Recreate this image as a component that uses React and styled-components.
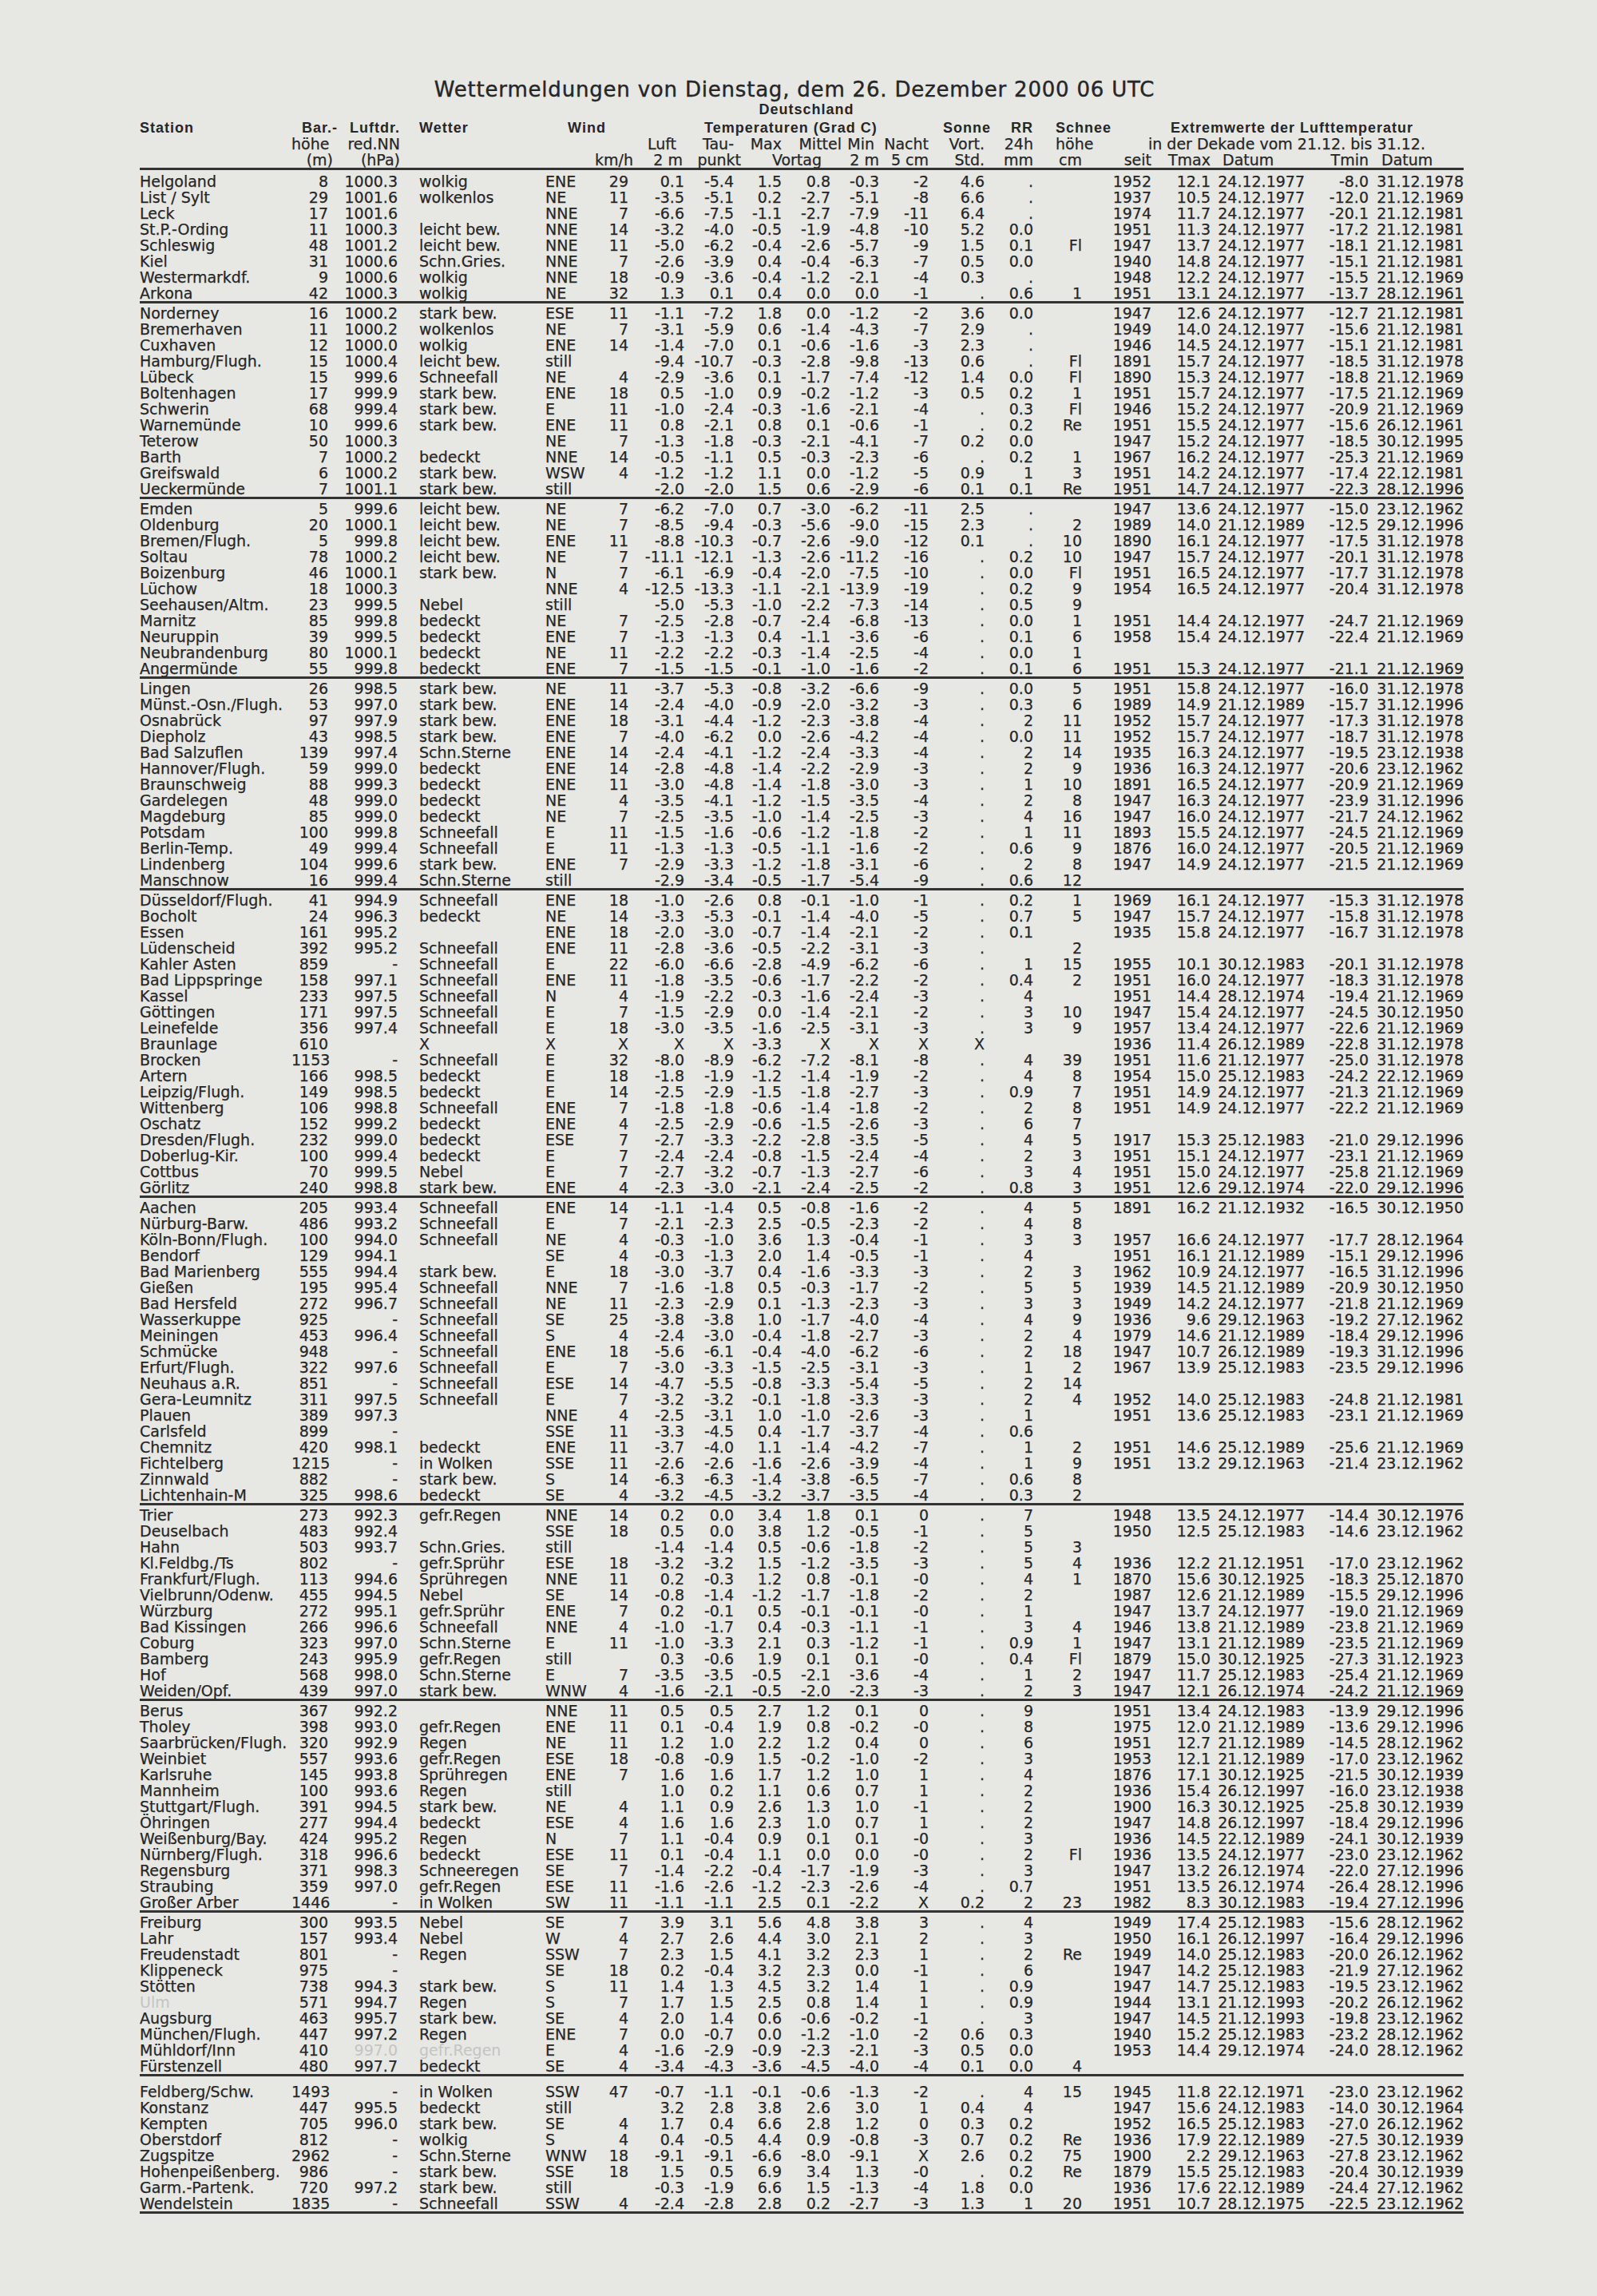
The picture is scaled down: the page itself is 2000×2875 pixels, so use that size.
import React from 'react';
import styled, {createGlobalStyle, css} from 'styled-components';

// column tracks, in px, left edge of the sheet is x=175
const COLUMNS = [
  {key: 'station', w: 190, align: 'left'},
  {key: 'bar', w: 46},
  {key: 'druck', w: 87},
  {key: 'wetter', w: 185, align: 'left', pad: 27},
  {key: 'wind', w: 62, align: 'left'},
  {key: 'kmh', w: 42},
  {key: 'luft', w: 70},
  {key: 'tau', w: 62},
  {key: 'max', w: 60},
  {key: 'mittel', w: 61},
  {key: 'min', w: 61},
  {key: 'nacht', w: 62},
  {key: 'sonne', w: 70},
  {key: 'rr', w: 61},
  {key: 'schnee', w: 61},
  {key: 'seit', w: 87},
  {key: 'tmax', w: 74},
  {key: 'tmaxd', w: 118},
  {key: 'tmin', w: 80},
  {key: 'tmind', w: 119},
];

const GRID = COLUMNS.map(c => `${c.w}px`).join(' ');

// station|bar|hPa|wetter|wind|km/h|luft|tau|max|mittel|min|nacht|sonne|rr|schnee|seit|tmax|datum|tmin|datum
const GROUPS = [
  {
    rows: [
      'Helgoland|8|1000.3|wolkig|ENE|29|0.1|-5.4|1.5|0.8|-0.3|-2|4.6|.||1952|12.1|24.12.1977|-8.0|31.12.1978',
      'List / Sylt|29|1001.6|wolkenlos|NE|11|-3.5|-5.1|0.2|-2.7|-5.1|-8|6.6|.||1937|10.5|24.12.1977|-12.0|21.12.1969',
      'Leck|17|1001.6||NNE|7|-6.6|-7.5|-1.1|-2.7|-7.9|-11|6.4|.||1974|11.7|24.12.1977|-20.1|21.12.1981',
      'St.P.-Ording|11|1000.3|leicht bew.|NNE|14|-3.2|-4.0|-0.5|-1.9|-4.8|-10|5.2|0.0||1951|11.3|24.12.1977|-17.2|21.12.1981',
      'Schleswig|48|1001.2|leicht bew.|NNE|11|-5.0|-6.2|-0.4|-2.6|-5.7|-9|1.5|0.1|Fl|1947|13.7|24.12.1977|-18.1|21.12.1981',
      'Kiel|31|1000.6|Schn.Gries.|NNE|7|-2.6|-3.9|0.4|-0.4|-6.3|-7|0.5|0.0||1940|14.8|24.12.1977|-15.1|21.12.1981',
      'Westermarkdf.|9|1000.6|wolkig|NNE|18|-0.9|-3.6|-0.4|-1.2|-2.1|-4|0.3|.||1948|12.2|24.12.1977|-15.5|21.12.1969',
      'Arkona|42|1000.3|wolkig|NE|32|1.3|0.1|0.4|0.0|0.0|-1|.|0.6|1|1951|13.1|24.12.1977|-13.7|28.12.1961',
    ],
  },
  {
    rows: [
      'Norderney|16|1000.2|stark bew.|ESE|11|-1.1|-7.2|1.8|0.0|-1.2|-2|3.6|0.0||1947|12.6|24.12.1977|-12.7|21.12.1981',
      'Bremerhaven|11|1000.2|wolkenlos|NE|7|-3.1|-5.9|0.6|-1.4|-4.3|-7|2.9|.||1949|14.0|24.12.1977|-15.6|21.12.1981',
      'Cuxhaven|12|1000.0|wolkig|ENE|14|-1.4|-7.0|0.1|-0.6|-1.6|-3|2.3|.||1946|14.5|24.12.1977|-15.1|21.12.1981',
      'Hamburg/Flugh.|15|1000.4|leicht bew.|still||-9.4|-10.7|-0.3|-2.8|-9.8|-13|0.6|.|Fl|1891|15.7|24.12.1977|-18.5|31.12.1978',
      'Lübeck|15|999.6|Schneefall|NE|4|-2.9|-3.6|0.1|-1.7|-7.4|-12|1.4|0.0|Fl|1890|15.3|24.12.1977|-18.8|21.12.1969',
      'Boltenhagen|17|999.9|stark bew.|ENE|18|0.5|-1.0|0.9|-0.2|-1.2|-3|0.5|0.2|1|1951|15.7|24.12.1977|-17.5|21.12.1969',
      'Schwerin|68|999.4|stark bew.|E|11|-1.0|-2.4|-0.3|-1.6|-2.1|-4|.|0.3|Fl|1946|15.2|24.12.1977|-20.9|21.12.1969',
      'Warnemünde|10|999.6|stark bew.|ENE|11|0.8|-2.1|0.8|0.1|-0.6|-1|.|0.2|Re|1951|15.5|24.12.1977|-15.6|26.12.1961',
      'Teterow|50|1000.3||NE|7|-1.3|-1.8|-0.3|-2.1|-4.1|-7|0.2|0.0||1947|15.2|24.12.1977|-18.5|30.12.1995',
      'Barth|7|1000.2|bedeckt|NNE|14|-0.5|-1.1|0.5|-0.3|-2.3|-6|.|0.2|1|1967|16.2|24.12.1977|-25.3|21.12.1969',
      'Greifswald|6|1000.2|stark bew.|WSW|4|-1.2|-1.2|1.1|0.0|-1.2|-5|0.9|1|3|1951|14.2|24.12.1977|-17.4|22.12.1981',
      'Ueckermünde|7|1001.1|stark bew.|still||-2.0|-2.0|1.5|0.6|-2.9|-6|0.1|0.1|Re|1951|14.7|24.12.1977|-22.3|28.12.1996',
    ],
  },
  {
    rows: [
      'Emden|5|999.6|leicht bew.|NE|7|-6.2|-7.0|0.7|-3.0|-6.2|-11|2.5|.||1947|13.6|24.12.1977|-15.0|23.12.1962',
      'Oldenburg|20|1000.1|leicht bew.|NE|7|-8.5|-9.4|-0.3|-5.6|-9.0|-15|2.3|.|2|1989|14.0|21.12.1989|-12.5|29.12.1996',
      'Bremen/Flugh.|5|999.8|leicht bew.|ENE|11|-8.8|-10.3|-0.7|-2.6|-9.0|-12|0.1|.|10|1890|16.1|24.12.1977|-17.5|31.12.1978',
      'Soltau|78|1000.2|leicht bew.|NE|7|-11.1|-12.1|-1.3|-2.6|-11.2|-16|.|0.2|10|1947|15.7|24.12.1977|-20.1|31.12.1978',
      'Boizenburg|46|1000.1|stark bew.|N|7|-6.1|-6.9|-0.4|-2.0|-7.5|-10|.|0.0|Fl|1951|16.5|24.12.1977|-17.7|31.12.1978',
      'Lüchow|18|1000.3||NNE|4|-12.5|-13.3|-1.1|-2.1|-13.9|-19|.|0.2|9|1954|16.5|24.12.1977|-20.4|31.12.1978',
      'Seehausen/Altm.|23|999.5|Nebel|still||-5.0|-5.3|-1.0|-2.2|-7.3|-14|.|0.5|9',
      'Marnitz|85|999.8|bedeckt|NE|7|-2.5|-2.8|-0.7|-2.4|-6.8|-13|.|0.0|1|1951|14.4|24.12.1977|-24.7|21.12.1969',
      'Neuruppin|39|999.5|bedeckt|ENE|7|-1.3|-1.3|0.4|-1.1|-3.6|-6|.|0.1|6|1958|15.4|24.12.1977|-22.4|21.12.1969',
      'Neubrandenburg|80|1000.1|bedeckt|NE|11|-2.2|-2.2|-0.3|-1.4|-2.5|-4|.|0.0|1',
      'Angermünde|55|999.8|bedeckt|ENE|7|-1.5|-1.5|-0.1|-1.0|-1.6|-2|.|0.1|6|1951|15.3|24.12.1977|-21.1|21.12.1969',
    ],
  },
  {
    rows: [
      'Lingen|26|998.5|stark bew.|NE|11|-3.7|-5.3|-0.8|-3.2|-6.6|-9|.|0.0|5|1951|15.8|24.12.1977|-16.0|31.12.1978',
      'Münst.-Osn./Flugh.|53|997.0|stark bew.|ENE|14|-2.4|-4.0|-0.9|-2.0|-3.2|-3|.|0.3|6|1989|14.9|21.12.1989|-15.7|31.12.1996',
      'Osnabrück|97|997.9|stark bew.|ENE|18|-3.1|-4.4|-1.2|-2.3|-3.8|-4|.|2|11|1952|15.7|24.12.1977|-17.3|31.12.1978',
      'Diepholz|43|998.5|stark bew.|ENE|7|-4.0|-6.2|0.0|-2.6|-4.2|-4|.|0.0|11|1952|15.7|24.12.1977|-18.7|31.12.1978',
      'Bad Salzuflen|139|997.4|Schn.Sterne|ENE|14|-2.4|-4.1|-1.2|-2.4|-3.3|-4|.|2|14|1935|16.3|24.12.1977|-19.5|23.12.1938',
      'Hannover/Flugh.|59|999.0|bedeckt|ENE|14|-2.8|-4.8|-1.4|-2.2|-2.9|-3|.|2|9|1936|16.3|24.12.1977|-20.6|23.12.1962',
      'Braunschweig|88|999.3|bedeckt|ENE|11|-3.0|-4.8|-1.4|-1.8|-3.0|-3|.|1|10|1891|16.5|24.12.1977|-20.9|21.12.1969',
      'Gardelegen|48|999.0|bedeckt|NE|4|-3.5|-4.1|-1.2|-1.5|-3.5|-4|.|2|8|1947|16.3|24.12.1977|-23.9|31.12.1996',
      'Magdeburg|85|999.0|bedeckt|NE|7|-2.5|-3.5|-1.0|-1.4|-2.5|-3|.|4|16|1947|16.0|24.12.1977|-21.7|24.12.1962',
      'Potsdam|100|999.8|Schneefall|E|11|-1.5|-1.6|-0.6|-1.2|-1.8|-2|.|1|11|1893|15.5|24.12.1977|-24.5|21.12.1969',
      'Berlin-Temp.|49|999.4|Schneefall|E|11|-1.3|-1.3|-0.5|-1.1|-1.6|-2|.|0.6|9|1876|16.0|24.12.1977|-20.5|21.12.1969',
      'Lindenberg|104|999.6|stark bew.|ENE|7|-2.9|-3.3|-1.2|-1.8|-3.1|-6|.|2|8|1947|14.9|24.12.1977|-21.5|21.12.1969',
      'Manschnow|16|999.4|Schn.Sterne|still||-2.9|-3.4|-0.5|-1.7|-5.4|-9|.|0.6|12',
    ],
  },
  {
    rows: [
      'Düsseldorf/Flugh.|41|994.9|Schneefall|ENE|18|-1.0|-2.6|0.8|-0.1|-1.0|-1|.|0.2|1|1969|16.1|24.12.1977|-15.3|31.12.1978',
      'Bocholt|24|996.3|bedeckt|NE|14|-3.3|-5.3|-0.1|-1.4|-4.0|-5|.|0.7|5|1947|15.7|24.12.1977|-15.8|31.12.1978',
      'Essen|161|995.2||ENE|18|-2.0|-3.0|-0.7|-1.4|-2.1|-2|.|0.1||1935|15.8|24.12.1977|-16.7|31.12.1978',
      'Lüdenscheid|392|995.2|Schneefall|ENE|11|-2.8|-3.6|-0.5|-2.2|-3.1|-3|.||2',
      'Kahler Asten|859|-|Schneefall|E|22|-6.0|-6.6|-2.8|-4.9|-6.2|-6|.|1|15|1955|10.1|30.12.1983|-20.1|31.12.1978',
      'Bad Lippspringe|158|997.1|Schneefall|ENE|11|-1.8|-3.5|-0.6|-1.7|-2.2|-2|.|0.4|2|1951|16.0|24.12.1977|-18.3|31.12.1978',
      'Kassel|233|997.5|Schneefall|N|4|-1.9|-2.2|-0.3|-1.6|-2.4|-3|.|4||1951|14.4|28.12.1974|-19.4|21.12.1969',
      'Göttingen|171|997.5|Schneefall|E|7|-1.5|-2.9|0.0|-1.4|-2.1|-2|.|3|10|1947|15.4|24.12.1977|-24.5|30.12.1950',
      'Leinefelde|356|997.4|Schneefall|E|18|-3.0|-3.5|-1.6|-2.5|-3.1|-3|.|3|9|1957|13.4|24.12.1977|-22.6|21.12.1969',
      'Braunlage|610||X|X|X|X|X|-3.3|X|X|X|X|||1936|11.4|26.12.1989|-22.8|31.12.1978',
      'Brocken|1153|-|Schneefall|E|32|-8.0|-8.9|-6.2|-7.2|-8.1|-8|.|4|39|1951|11.6|21.12.1977|-25.0|31.12.1978',
      'Artern|166|998.5|bedeckt|E|18|-1.8|-1.9|-1.2|-1.4|-1.9|-2|.|4|8|1954|15.0|25.12.1983|-24.2|22.12.1969',
      'Leipzig/Flugh.|149|998.5|bedeckt|E|14|-2.5|-2.9|-1.5|-1.8|-2.7|-3|.|0.9|7|1951|14.9|24.12.1977|-21.3|21.12.1969',
      'Wittenberg|106|998.8|Schneefall|ENE|7|-1.8|-1.8|-0.6|-1.4|-1.8|-2|.|2|8|1951|14.9|24.12.1977|-22.2|21.12.1969',
      'Oschatz|152|999.2|bedeckt|ENE|4|-2.5|-2.9|-0.6|-1.5|-2.6|-3|.|6|7',
      'Dresden/Flugh.|232|999.0|bedeckt|ESE|7|-2.7|-3.3|-2.2|-2.8|-3.5|-5|.|4|5|1917|15.3|25.12.1983|-21.0|29.12.1996',
      'Doberlug-Kir.|100|999.4|bedeckt|E|7|-2.4|-2.4|-0.8|-1.5|-2.4|-4|.|2|3|1951|15.1|24.12.1977|-23.1|21.12.1969',
      'Cottbus|70|999.5|Nebel|E|7|-2.7|-3.2|-0.7|-1.3|-2.7|-6|.|3|4|1951|15.0|24.12.1977|-25.8|21.12.1969',
      'Görlitz|240|998.8|stark bew.|ENE|4|-2.3|-3.0|-2.1|-2.4|-2.5|-2|.|0.8|3|1951|12.6|29.12.1974|-22.0|29.12.1996',
    ],
  },
  {
    rows: [
      'Aachen|205|993.4|Schneefall|ENE|14|-1.1|-1.4|0.5|-0.8|-1.6|-2|.|4|5|1891|16.2|21.12.1932|-16.5|30.12.1950',
      'Nürburg-Barw.|486|993.2|Schneefall|E|7|-2.1|-2.3|2.5|-0.5|-2.3|-2|.|4|8',
      'Köln-Bonn/Flugh.|100|994.0|Schneefall|NE|4|-0.3|-1.0|3.6|1.3|-0.4|-1|.|3|3|1957|16.6|24.12.1977|-17.7|28.12.1964',
      'Bendorf|129|994.1||SE|4|-0.3|-1.3|2.0|1.4|-0.5|-1|.|4||1951|16.1|21.12.1989|-15.1|29.12.1996',
      'Bad Marienberg|555|994.4|stark bew.|E|18|-3.0|-3.7|0.4|-1.6|-3.3|-3|.|2|3|1962|10.9|24.12.1977|-16.5|31.12.1996',
      'Gießen|195|995.4|Schneefall|NNE|7|-1.6|-1.8|0.5|-0.3|-1.7|-2|.|5|5|1939|14.5|21.12.1989|-20.9|30.12.1950',
      'Bad Hersfeld|272|996.7|Schneefall|NE|11|-2.3|-2.9|0.1|-1.3|-2.3|-3|.|3|3|1949|14.2|24.12.1977|-21.8|21.12.1969',
      'Wasserkuppe|925|-|Schneefall|SE|25|-3.8|-3.8|1.0|-1.7|-4.0|-4|.|4|9|1936|9.6|29.12.1963|-19.2|27.12.1962',
      'Meiningen|453|996.4|Schneefall|S|4|-2.4|-3.0|-0.4|-1.8|-2.7|-3|.|2|4|1979|14.6|21.12.1989|-18.4|29.12.1996',
      'Schmücke|948|-|Schneefall|ENE|18|-5.6|-6.1|-0.4|-4.0|-6.2|-6|.|2|18|1947|10.7|26.12.1989|-19.3|31.12.1996',
      'Erfurt/Flugh.|322|997.6|Schneefall|E|7|-3.0|-3.3|-1.5|-2.5|-3.1|-3|.|1|2|1967|13.9|25.12.1983|-23.5|29.12.1996',
      'Neuhaus a.R.|851|-|Schneefall|ESE|14|-4.7|-5.5|-0.8|-3.3|-5.4|-5|.|2|14',
      'Gera-Leumnitz|311|997.5|Schneefall|E|7|-3.2|-3.2|-0.1|-1.8|-3.3|-3|.|2|4|1952|14.0|25.12.1983|-24.8|21.12.1981',
      'Plauen|389|997.3||NNE|4|-2.5|-3.1|1.0|-1.0|-2.6|-3|.|1||1951|13.6|25.12.1983|-23.1|21.12.1969',
      'Carlsfeld|899|-||SSE|11|-3.3|-4.5|0.4|-1.7|-3.7|-4|.|0.6',
      'Chemnitz|420|998.1|bedeckt|ENE|11|-3.7|-4.0|1.1|-1.4|-4.2|-7|.|1|2|1951|14.6|25.12.1989|-25.6|21.12.1969',
      'Fichtelberg|1215|-|in Wolken|SSE|11|-2.6|-2.6|-1.6|-2.6|-3.9|-4|.|1|9|1951|13.2|29.12.1963|-21.4|23.12.1962',
      'Zinnwald|882|-|stark bew.|S|14|-6.3|-6.3|-1.4|-3.8|-6.5|-7|.|0.6|8',
      'Lichtenhain-M|325|998.6|bedeckt|SE|4|-3.2|-4.5|-3.2|-3.7|-3.5|-4|.|0.3|2',
    ],
  },
  {
    rows: [
      'Trier|273|992.3|gefr.Regen|NNE|14|0.2|0.0|3.4|1.8|0.1|0|.|7||1948|13.5|24.12.1977|-14.4|30.12.1976',
      'Deuselbach|483|992.4||SSE|18|0.5|0.0|3.8|1.2|-0.5|-1|.|5||1950|12.5|25.12.1983|-14.6|23.12.1962',
      'Hahn|503|993.7|Schn.Gries.|still||-1.4|-1.4|0.5|-0.6|-1.8|-2|.|5|3',
      'Kl.Feldbg./Ts|802|-|gefr.Sprühr|ESE|18|-3.2|-3.2|1.5|-1.2|-3.5|-3|.|5|4|1936|12.2|21.12.1951|-17.0|23.12.1962',
      'Frankfurt/Flugh.|113|994.6|Sprühregen|NNE|11|0.2|-0.3|1.2|0.8|-0.1|-0|.|4|1|1870|15.6|30.12.1925|-18.3|25.12.1870',
      'Vielbrunn/Odenw.|455|994.5|Nebel|SE|14|-0.8|-1.4|-1.2|-1.7|-1.8|-2|.|2||1987|12.6|21.12.1989|-15.5|29.12.1996',
      'Würzburg|272|995.1|gefr.Sprühr|ENE|7|0.2|-0.1|0.5|-0.1|-0.1|-0|.|1||1947|13.7|24.12.1977|-19.0|21.12.1969',
      'Bad Kissingen|266|996.6|Schneefall|NNE|4|-1.0|-1.7|0.4|-0.3|-1.1|-1|.|3|4|1946|13.8|21.12.1989|-23.8|21.12.1969',
      'Coburg|323|997.0|Schn.Sterne|E|11|-1.0|-3.3|2.1|0.3|-1.2|-1|.|0.9|1|1947|13.1|21.12.1989|-23.5|21.12.1969',
      'Bamberg|243|995.9|gefr.Regen|still||0.3|-0.6|1.9|0.1|0.1|-0|.|0.4|Fl|1879|15.0|30.12.1925|-27.3|31.12.1923',
      'Hof|568|998.0|Schn.Sterne|E|7|-3.5|-3.5|-0.5|-2.1|-3.6|-4|.|1|2|1947|11.7|25.12.1983|-25.4|21.12.1969',
      'Weiden/Opf.|439|997.0|stark bew.|WNW|4|-1.6|-2.1|-0.5|-2.0|-2.3|-3|.|2|3|1947|12.1|26.12.1974|-24.2|21.12.1969',
    ],
  },
  {
    rows: [
      'Berus|367|992.2||NNE|11|0.5|0.5|2.7|1.2|0.1|0|.|9||1951|13.4|24.12.1983|-13.9|29.12.1996',
      'Tholey|398|993.0|gefr.Regen|ENE|11|0.1|-0.4|1.9|0.8|-0.2|-0|.|8||1975|12.0|21.12.1989|-13.6|29.12.1996',
      'Saarbrücken/Flugh.|320|992.9|Regen|NE|11|1.2|1.0|2.2|1.2|0.4|0|.|6||1951|12.7|21.12.1989|-14.5|28.12.1962',
      'Weinbiet|557|993.6|gefr.Regen|ESE|18|-0.8|-0.9|1.5|-0.2|-1.0|-2|.|3||1953|12.1|21.12.1989|-17.0|23.12.1962',
      'Karlsruhe|145|993.8|Sprühregen|ENE|7|1.6|1.6|1.7|1.2|1.0|1|.|4||1876|17.1|30.12.1925|-21.5|30.12.1939',
      'Mannheim|100|993.6|Regen|still||1.0|0.2|1.1|0.6|0.7|1|.|2||1936|15.4|26.12.1997|-16.0|23.12.1938',
      'Stuttgart/Flugh.|391|994.5|stark bew.|NE|4|1.1|0.9|2.6|1.3|1.0|-1|.|2||1900|16.3|30.12.1925|-25.8|30.12.1939',
      'Öhringen|277|994.4|bedeckt|ESE|4|1.6|1.6|2.3|1.0|0.7|1|.|2||1947|14.8|26.12.1997|-18.4|29.12.1996',
      'Weißenburg/Bay.|424|995.2|Regen|N|7|1.1|-0.4|0.9|0.1|0.1|-0|.|3||1936|14.5|22.12.1989|-24.1|30.12.1939',
      'Nürnberg/Flugh.|318|996.6|bedeckt|ESE|11|0.1|-0.4|1.1|0.0|0.0|-0|.|2|Fl|1936|13.5|24.12.1977|-23.0|23.12.1962',
      'Regensburg|371|998.3|Schneeregen|SE|7|-1.4|-2.2|-0.4|-1.7|-1.9|-3|.|3||1947|13.2|26.12.1974|-22.0|27.12.1996',
      'Straubing|359|997.0|gefr.Regen|ESE|11|-1.6|-2.6|-1.2|-2.3|-2.6|-4|.|0.7||1951|13.5|26.12.1974|-26.4|28.12.1996',
      'Großer Arber|1446|-|in Wolken|SW|11|-1.1|-1.1|2.5|0.1|-2.2|X|0.2|2|23|1982|8.3|30.12.1983|-19.4|27.12.1996',
    ],
  },
  {
    gap: 9,
    rows: [
      'Freiburg|300|993.5|Nebel|SE|7|3.9|3.1|5.6|4.8|3.8|3|.|4||1949|17.4|25.12.1983|-15.6|28.12.1962',
      'Lahr|157|993.4|Nebel|W|4|2.7|2.6|4.4|3.0|2.1|2|.|3||1950|16.1|26.12.1997|-16.4|29.12.1996',
      'Freudenstadt|801|-|Regen|SSW|7|2.3|1.5|4.1|3.2|2.3|1|.|2|Re|1949|14.0|25.12.1983|-20.0|26.12.1962',
      'Klippeneck|975|-||SE|18|0.2|-0.4|3.2|2.3|0.0|-1|.|6||1947|14.2|25.12.1983|-21.9|27.12.1962',
      'Stötten|738|994.3|stark bew.|S|11|1.4|1.3|4.5|3.2|1.4|1|.|0.9||1947|14.7|25.12.1983|-19.5|23.12.1962',
      '~Ulm|571|994.7|Regen|S|7|1.7|1.5|2.5|0.8|1.4|1|.|0.9||1944|13.1|21.12.1993|-20.2|26.12.1962',
      'Augsburg|463|995.7|stark bew.|SE|4|2.0|1.4|0.6|-0.6|-0.2|-1|.|3||1947|14.5|21.12.1993|-19.8|23.12.1962',
      'München/Flugh.|447|997.2|Regen|ENE|7|0.0|-0.7|0.0|-1.2|-1.0|-2|0.6|0.3||1940|15.2|25.12.1983|-23.2|28.12.1962',
      'Mühldorf/Inn|410|~997.0|~gefr.Regen|E|4|-1.6|-2.9|-0.9|-2.3|-2.1|-3|0.5|0.0||1953|14.4|29.12.1974|-24.0|28.12.1962',
      'Fürstenzell|480|997.7|bedeckt|SE|4|-3.4|-4.3|-3.6|-4.5|-4.0|-4|0.1|0.0|4',
    ],
  },
  {
    rows: [
      'Feldberg/Schw.|1493|-|in Wolken|SSW|47|-0.7|-1.1|-0.1|-0.6|-1.3|-2|.|4|15|1945|11.8|22.12.1971|-23.0|23.12.1962',
      'Konstanz|447|995.5|bedeckt|still||3.2|2.8|3.8|2.6|3.0|1|0.4|4||1947|15.6|24.12.1983|-14.0|30.12.1964',
      'Kempten|705|996.0|stark bew.|SE|4|1.7|0.4|6.6|2.8|1.2|0|0.3|0.2||1952|16.5|25.12.1983|-27.0|26.12.1962',
      'Oberstdorf|812|-|wolkig|S|4|0.4|-0.5|4.4|0.9|-0.8|-3|0.7|0.2|Re|1936|17.9|22.12.1989|-27.5|30.12.1939',
      'Zugspitze|2962|-|Schn.Sterne|WNW|18|-9.1|-9.1|-6.6|-8.0|-9.1|X|2.6|0.2|75|1900|2.2|29.12.1963|-27.8|23.12.1962',
      'Hohenpeißenberg.|986|-|stark bew.|SSE|18|1.5|0.5|6.9|3.4|1.3|-0|.|0.2|Re|1879|15.5|25.12.1983|-20.4|30.12.1939',
      'Garm.-Partenk.|720|997.2|stark bew.|still||-0.3|-1.9|6.6|1.5|-1.3|-4|1.8|0.0||1936|17.6|22.12.1989|-24.4|27.12.1962',
      'Wendelstein|1835|-|Schneefall|SSW|4|-2.4|-2.8|2.8|0.2|-2.7|-3|1.3|1|20|1951|10.7|28.12.1975|-22.5|23.12.1962',
    ],
  },
];

const HEADER = [
  {row: 1, col: '8 / 13', align: 'center', bold: true, text: 'Deutschland'},

  {row: 2, col: '1', align: 'left', bold: true, text: 'Station'},
  {row: 2, col: '2', shift: 12, bold: true, text: 'Bar.-'},
  {row: 2, col: '3', shift: 3, bold: true, text: 'Luftdr.'},
  {row: 2, col: '4', align: 'left', pad: 27, bold: true, text: 'Wetter'},
  {row: 2, col: '5 / 7', align: 'center', bold: true, text: 'Wind'},
  {row: 2, col: '8 / 13', align: 'left', pad: 25, bold: true, text: 'Temperaturen (Grad C)'},
  {row: 2, col: '13', shift: 8, bold: true, text: 'Sonne'},
  {row: 2, col: '14', bold: true, text: 'RR'},
  {row: 2, col: '15', align: 'left', pad: 28, bold: true, text: 'Schnee'},
  {row: 2, col: '16 / 21', align: 'left', pad: 111, bold: true, text: 'Extremwerte der Lufttemperatur'},

  {row: 3, col: '2', text: 'höhe'},
  {row: 3, col: '3', shift: 3, text: 'red.NN'},
  {row: 3, col: '7', inset: 10, text: 'Luft'},
  {row: 3, col: '8', text: 'Tau-'},
  {row: 3, col: '9', text: 'Max'},
  {row: 3, col: '10', shift: 14, text: 'Mittel'},
  {row: 3, col: '11', inset: 6, text: 'Min'},
  {row: 3, col: '12', text: 'Nacht'},
  {row: 3, col: '13', text: 'Vort.'},
  {row: 3, col: '14', text: '24h'},
  {row: 3, col: '15', align: 'left', pad: 28, text: 'höhe'},
  {row: 3, col: '16 / 21', align: 'left', pad: 83, text: 'in der Dekade vom 21.12. bis 31.12.'},

  {row: 4, col: '2', shift: 6, text: '(m)'},
  {row: 4, col: '3', shift: 3, text: '(hPa)'},
  {row: 4, col: '6', text: 'km/h'},
  {row: 4, col: '7', inset: 2, text: '2 m'},
  {row: 4, col: '8', shift: 9, text: 'punkt'},
  {row: 4, col: '9 / 11', inset: 11, text: 'Vortag'},
  {row: 4, col: '11', text: '2 m'},
  {row: 4, col: '12', text: '5 cm'},
  {row: 4, col: '13', text: 'Std.'},
  {row: 4, col: '14', text: 'mm'},
  {row: 4, col: '15', text: 'cm'},
  {row: 4, col: '16', text: 'seit'},
  {row: 4, col: '17', text: 'Tmax'},
  {row: 4, col: '18', align: 'left', pad: 15, text: 'Datum'},
  {row: 4, col: '19', text: 'Tmin'},
  {row: 4, col: '20', align: 'left', pad: 16, text: 'Datum'},
];

const StationRow = ({line}) => {
  const cells = line.split('|');
  return (
    <StRow>
      {COLUMNS.map((col, i) => {
        const raw = cells[i] || '';
        const faint = raw.startsWith('~');
        return (
          <StCell key={col.key} $align={col.align} $pad={col.pad} $faint={faint}>
            {faint ? raw.slice(1) : raw}
          </StCell>
        );
      })}
    </StRow>
  );
};

const App = () => {
  return (
    <>
      <GlobalStyle />
      <StSheet>
        <StTitle>Wettermeldungen von Dienstag, dem 26. Dezember 2000 06 UTC</StTitle>
        <StHead>
          {HEADER.map((h, i) => (
            <StHeadCell
              key={i}
              $row={h.row}
              $col={h.col}
              $align={h.align}
              $pad={h.pad}
              $shift={h.shift}
              $inset={h.inset}
              $bold={h.bold}
            >
              {h.text}
            </StHeadCell>
          ))}
        </StHead>
        {GROUPS.map((group, gi) => (
          <StGroup key={gi} $gap={group.gap}>
            {group.rows.map(line => (
              <StationRow key={line} line={line} />
            ))}
          </StGroup>
        ))}
      </StSheet>
    </>
  );
};

export default App;

const INK = '#262626';
const DATA_FONT = '"DejaVu Sans", "Liberation Sans", Arial, sans-serif';
const HEAD_FONT = '"Liberation Sans", Arial, sans-serif';

const GlobalStyle = createGlobalStyle`
  html, body {
    margin: 0;
    padding: 0;
    background: #e7e7e4;
  }
  body {
    color: ${INK};
    font-family: ${DATA_FONT};
  }
`;

const StSheet = styled.main`
  box-sizing: border-box;
  width: 1658px;
  min-height: 2875px;
  margin-left: 175px;
  padding-top: 97px;
`;

const StTitle = styled.h1`
  margin: 0;
  padding-right: 18px;
  height: 30px;
  font-family: ${DATA_FONT};
  font-size: 26px;
  font-weight: normal;
  letter-spacing: 0.8px;
  line-height: 30px;
  text-align: center;
  white-space: nowrap;
  -webkit-text-stroke: 0.4px ${INK};
`;

const StHead = styled.div`
  display: grid;
  grid-template-columns: ${GRID};
  grid-template-rows: 20px 23px 20px 20px;
  border-bottom: 3px solid #333;
  margin-bottom: 4px;
`;

const StHeadCell = styled.div`
  grid-row: ${({$row}) => $row};
  grid-column: ${({$col}) => $col};
  align-self: end;
  min-width: 0;
  height: 20px;
  line-height: 20px;
  white-space: nowrap;
  text-align: ${({$align}) => $align || 'right'};
  padding-left: ${({$pad}) => $pad || 0}px;
  padding-right: ${({$inset}) => $inset || 0}px;
  margin-right: ${({$shift}) => -($shift || 0)}px;
  ${({$bold}) =>
    $bold
      ? css`
          font-family: ${HEAD_FONT};
          font-size: 18px;
          font-weight: bold;
          letter-spacing: 1px;
        `
      : css`
          font-family: ${DATA_FONT};
          font-size: 19px;
          -webkit-text-stroke: 0.25px ${INK};
        `}
`;

const StGroup = styled.section`
  border-bottom: 3px solid #333;
  margin-bottom: ${({$gap}) => $gap || 2}px;
`;

const StRow = styled.div`
  display: grid;
  grid-template-columns: ${GRID};
  height: 20px;
`;

const StCell = styled.div`
  min-width: 0;
  font-size: 19px;
  line-height: 20px;
  white-space: nowrap;
  text-align: ${({$align}) => $align || 'right'};
  padding-left: ${({$pad}) => $pad || 0}px;
  color: ${({$faint}) => ($faint ? '#c4c4c2' : INK)};
  -webkit-text-stroke: ${({$faint}) => ($faint ? 0 : 0.25)}px ${INK};
`;
